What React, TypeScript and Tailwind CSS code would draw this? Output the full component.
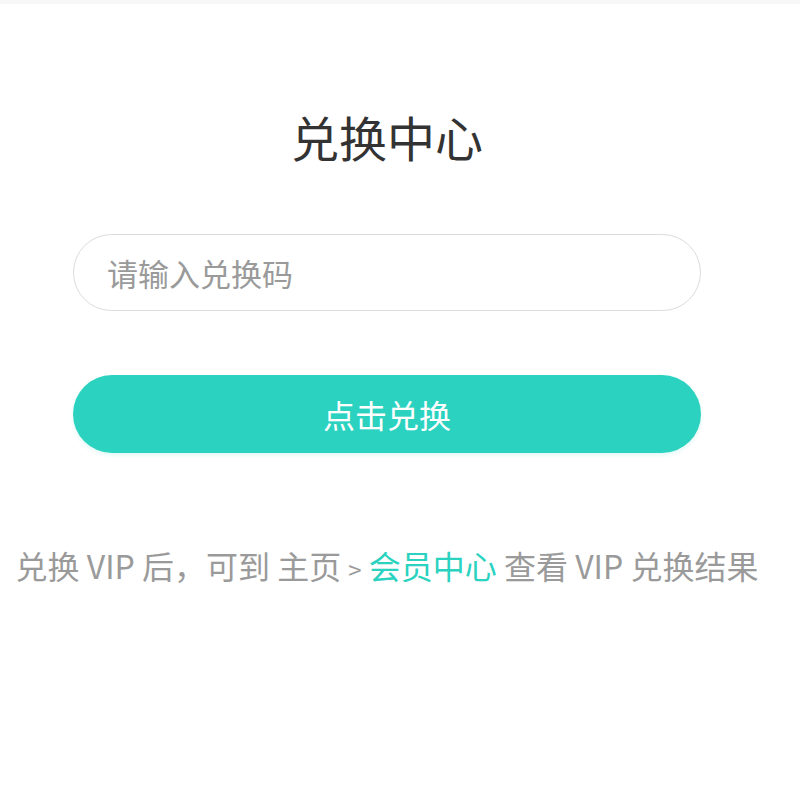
import React, { useState } from 'react';

export default function App() {
  const [code, setCode] = useState('');

  return (
    <div className="min-h-[800px] bg-white font-['Noto_Sans_CJK_SC','Noto_Sans',sans-serif]">
      <div className="h-[4px] bg-[#f7f7f7]" />
      <div className="w-[774px] flex flex-col items-center">
        <h1 className="mt-[100px] text-[48px] leading-[64px] text-[#333] font-normal">兑换中心</h1>

        <input
          value={code}
          onChange={e => setCode(e.target.value)}
          placeholder="请输入兑换码"
          className="mt-[66px] w-[628px] h-[77px] rounded-full border border-[#dcdcdc] px-[33px] text-[31px] text-[#333] placeholder:text-[#9a9a9a] outline-none"
        />

        <button className="mt-[64px] w-[628px] h-[78px] rounded-full bg-[#2bd2bf] text-white text-[32px] shadow-[0_2px_4px_rgba(43,210,191,0.15)]">
          点击兑换
        </button>

        <p className="mt-[90px] text-[32px] leading-[44px] text-[#9a9a9a] whitespace-nowrap">
          兑换 VIP 后，可到 主页 <span className="text-[24px]">&gt;</span> <span className="text-[#2bd2bf]">会员中心</span> 查看 VIP 兑换结果
        </p>
      </div>
    </div>
  );
}
